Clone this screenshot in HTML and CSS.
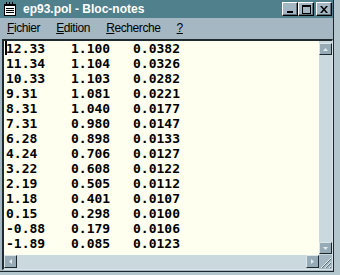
FILE: index.html
```html
<!DOCTYPE html>
<html lang="fr">
<head>
  <meta charset="UTF-8" />
  <title>ep93.pol - Bloc-notes</title>
  <link rel="stylesheet" href="styles.css">
</head>
<body>
  <div class="window">
    <div class="titlebar">
      <svg class="app-icon" viewBox="0 0 12 14">
        <rect x="0.5" y="2.5" width="11" height="11" fill="#fff" stroke="#000"/>
        <rect x="0" y="2" width="12" height="2" fill="#000"/>
        <rect x="2" y="0" width="1" height="4" fill="#000"/>
        <rect x="5" y="0" width="1" height="4" fill="#000"/>
        <rect x="8" y="0" width="1" height="4" fill="#000"/>
        <rect x="2" y="6" width="8" height="1" fill="#000"/>
        <rect x="2" y="8" width="8" height="1" fill="#000"/>
        <rect x="2" y="10" width="8" height="1" fill="#000"/>
      </svg>
      <span class="title">ep93.pol - Bloc-notes</span>
      <div class="caption-buttons">
        <div class="cap-btn">
          <svg width="8" height="7" viewBox="0 0 8 7"><rect x="1" y="5" width="6" height="2" fill="#000"/></svg>
        </div>
        <div class="cap-btn">
          <svg width="9" height="9" viewBox="0 0 9 9"><rect x="0.5" y="0.5" width="8" height="8" fill="none" stroke="#000"/><rect x="0" y="0" width="9" height="2" fill="#000"/></svg>
        </div>
        <div class="cap-btn close">
          <svg width="8" height="7" viewBox="0 0 8 7"><path d="M0 0h2l2 2.5 2-2.5h2l-3 3.5 3 3.5h-2l-2-2.5-2 2.5h-2l3-3.5z" fill="#000"/></svg>
        </div>
      </div>
    </div>

    <div class="menubar">
      <span class="menu-item"><u>F</u>ichier</span>
      <span class="menu-item"><u>E</u>dition</span>
      <span class="menu-item"><u>R</u>echerche</span>
      <span class="menu-item"><u>?</u></span>
    </div>

    <div class="editor">
      <div class="client">
        <div class="text">
          <span class="caret"></span>
          <div class="row"><span>12.33</span><span>1.100</span><span>0.0382</span></div>
          <div class="row"><span>11.34</span><span>1.104</span><span>0.0326</span></div>
          <div class="row"><span>10.33</span><span>1.103</span><span>0.0282</span></div>
          <div class="row"><span>9.31</span><span>1.081</span><span>0.0221</span></div>
          <div class="row"><span>8.31</span><span>1.040</span><span>0.0177</span></div>
          <div class="row"><span>7.31</span><span>0.980</span><span>0.0147</span></div>
          <div class="row"><span>6.28</span><span>0.898</span><span>0.0133</span></div>
          <div class="row"><span>4.24</span><span>0.706</span><span>0.0127</span></div>
          <div class="row"><span>3.22</span><span>0.608</span><span>0.0122</span></div>
          <div class="row"><span>2.19</span><span>0.505</span><span>0.0112</span></div>
          <div class="row"><span>1.18</span><span>0.401</span><span>0.0107</span></div>
          <div class="row"><span>0.15</span><span>0.298</span><span>0.0100</span></div>
          <div class="row"><span>-0.88</span><span>0.179</span><span>0.0106</span></div>
          <div class="row"><span>-1.89</span><span>0.085</span><span>0.0123</span></div>
        </div>
        <div class="vscroll">
          <div class="sb-btn up">
            <svg width="5" height="3" viewBox="0 0 5 3"><path d="M2.5 0L5 3H0z" fill="#e2ecef"/></svg>
          </div>
          <div class="sb-track"></div>
          <div class="sb-btn down">
            <svg width="5" height="3" viewBox="0 0 5 3"><path d="M0 0h5L2.5 3z" fill="#e2ecef"/></svg>
          </div>
        </div>
      </div>
      <div class="hscroll">
        <div class="sb-btn left">
          <svg width="3" height="5" viewBox="0 0 3 5"><path d="M3 0v5L0 2.5z" fill="#e2ecef"/></svg>
        </div>
        <div class="sb-track"></div>
        <div class="sb-btn right">
          <svg width="3" height="5" viewBox="0 0 3 5"><path d="M0 0l3 2.5L0 5z" fill="#e2ecef"/></svg>
        </div>
        <div class="grip">
          <svg width="13" height="14" viewBox="0 0 13 14">
            <path d="M12 3L2 13M12 7L6 13M12 11L10 13" stroke="#e2ecef"/>
            <path d="M12 4L3 13M12 8L7 13M12 12L11 13" stroke="#5d717b"/>
          </svg>
        </div>
      </div>
    </div>
  </div>
</body>
</html>
```

FILE: styles.css
```css
* {
  margin: 0;
  padding: 0;
  box-sizing: border-box;
}

body {
  background: #b3c5cd;
  width: 340px;
  height: 275px;
  overflow: hidden;
  font-family: 'Liberation Sans', Arial, sans-serif;
}

.window {
  width: 334px;
  background: #a4b7c3;
  border-right: 1px solid #1c272c;
  border-bottom: 1px solid #1c272c;
  padding-bottom: 1px;
}

/* title bar */
.titlebar {
  height: 18px;
  background: #4f808c;
  display: flex;
  align-items: center;
  padding: 0 1px 0 4px;
}

.app-icon {
  width: 12px;
  height: 14px;
  flex: none;
}

.title {
  flex: 1;
  margin-left: 7px;
  color: #fff;
  font-weight: bold;
  font-size: 12px;
  line-height: 18px;
  white-space: nowrap;
}

.caption-buttons {
  display: flex;
}

.cap-btn {
  width: 16px;
  height: 14px;
  background: #a4b7c3;
  border: 1px solid;
  border-color: #fff #000 #000 #fff;
  box-shadow: inset -1px -1px #5d717b;
  display: flex;
  align-items: center;
  justify-content: center;
}

.cap-btn.close {
  margin-left: 2px;
}

/* menu */
.menubar {
  height: 19px;
  display: flex;
  gap: 16px;
  padding: 1px 0 0 7px;
  font-size: 12px;
  letter-spacing: -0.4px;
  line-height: 18px;
  color: #000;
}

/* edit control */
.editor {
  margin: 2px 0 0 2px;
  width: 331px;
  border-style: solid;
  border-width: 2px 1px 1px 2px;
  border-color: #1f2a2f #d8e4e9 #d8e4e9 #1f2a2f;
}

.client {
  display: flex;
  height: 214px;
}

.text {
  flex: 1;
  position: relative;
  background: #fffff0;
  padding-left: 2px;
  font-family: 'DejaVu Sans Mono', 'Liberation Mono', monospace;
  font-weight: bold;
  font-size: 13px;
  line-height: 15px;
  color: #000;
  overflow: hidden;
}

.row {
  display: grid;
  grid-template-columns: 65px 62px auto;
}

.caret {
  position: absolute;
  left: 1px;
  top: 0;
  width: 2px;
  height: 14px;
  background: #000;
}

/* scroll bars */
.vscroll {
  width: 13px;
  background: #c9d9de;
  display: flex;
  flex-direction: column;
}

.sb-track {
  flex: 1;
}

.sb-btn {
  background: #97abb6;
  border: 1px solid;
  border-color: #dbe6ea #1c272c #1c272c #dbe6ea;
  display: flex;
  align-items: center;
  justify-content: center;
}

.vscroll .sb-btn {
  width: 13px;
  height: 12px;
}

.sb-btn.up {
  margin-top: 2px;
}

.sb-btn.down {
  margin-bottom: 1px;
}

.hscroll {
  height: 14px;
  display: flex;
  background: #c9d9de;
}

.hscroll .sb-btn {
  width: 13px;
  height: 13px;
}

.grip {
  width: 13px;
  height: 14px;
  background: #a4b7c3;
}

.grip svg {
  display: block;
}
```
